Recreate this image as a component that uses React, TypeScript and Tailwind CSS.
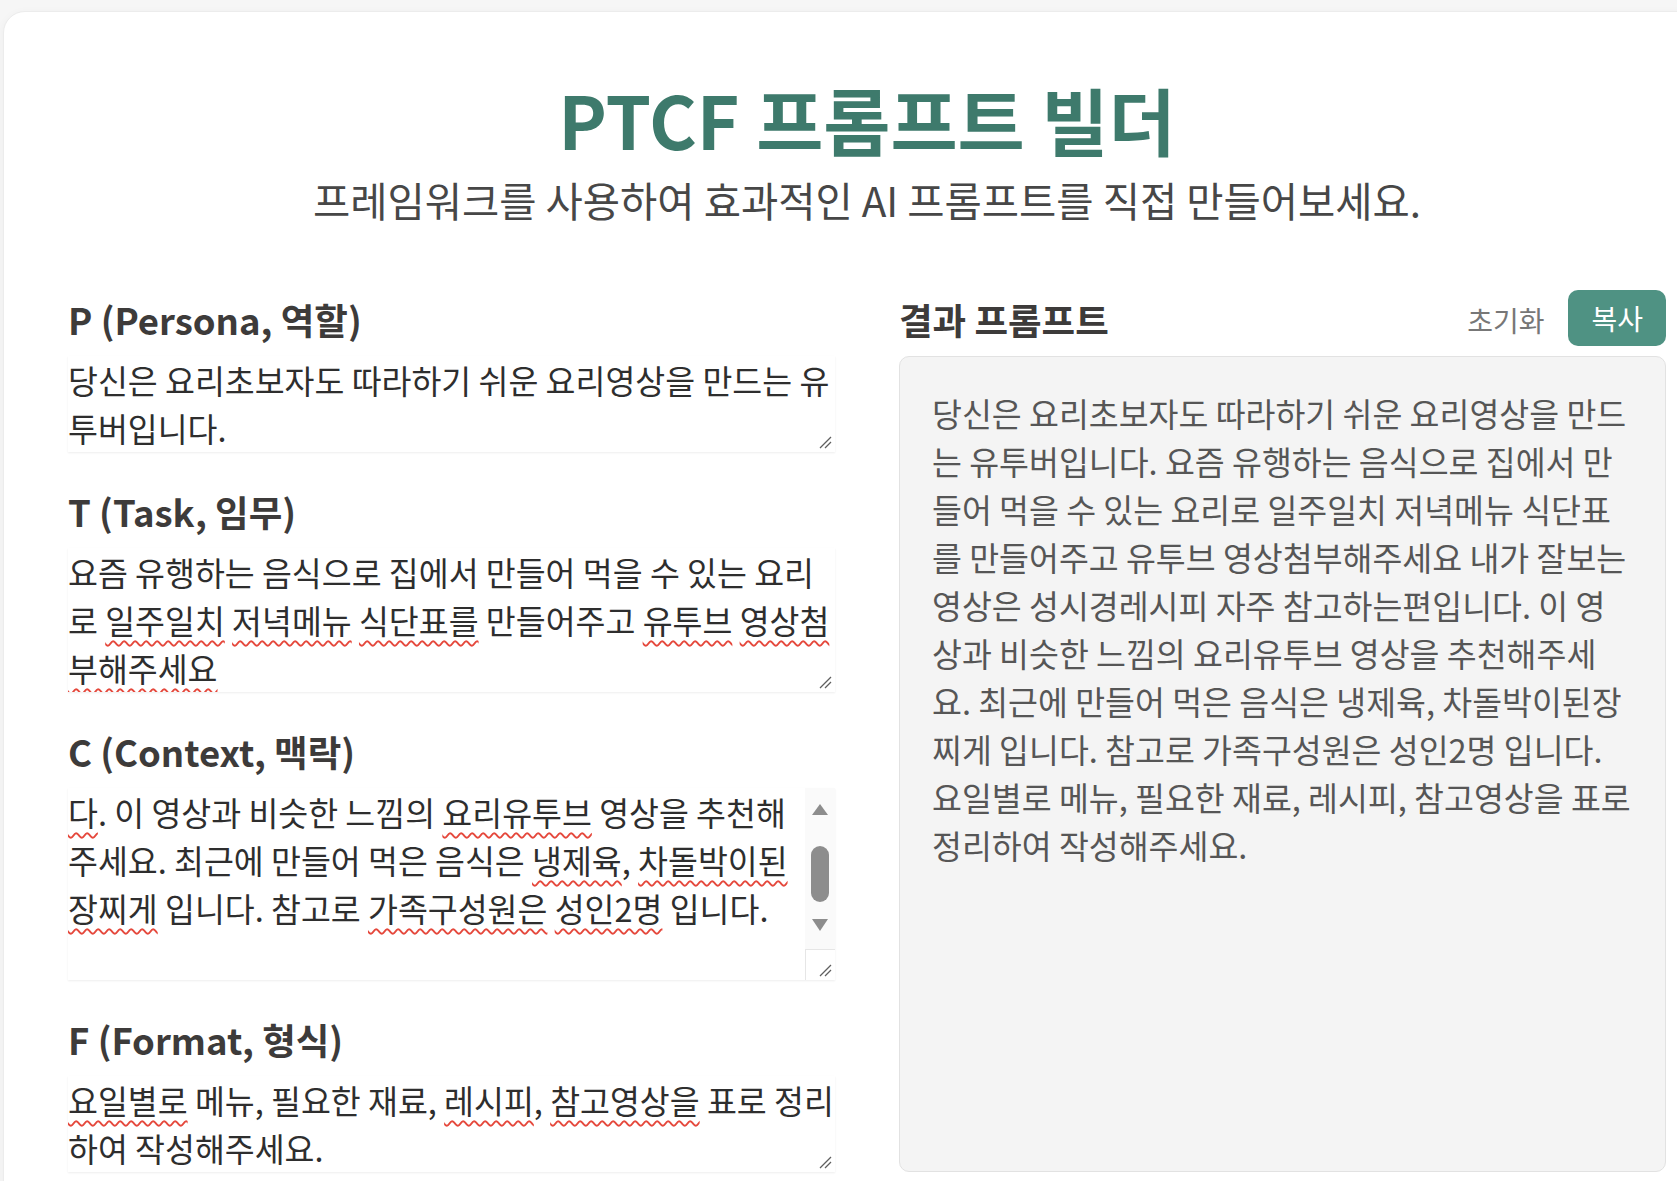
import React from "react";

// {word} marks a word the spell checker flags
const fields = [
  {
    label: "P (Persona, 역할)",
    rows: 2,
    lines: ["당신은 요리초보자도 따라하기 쉬운 요리영상을 만드는 유", "투버입니다."],
  },
  {
    label: "T (Task, 임무)",
    rows: 3,
    lines: [
      "요즘 유행하는 음식으로 집에서 만들어 먹을 수 있는 요리",
      "로 {일주일치} {저녁메뉴} {식단표를} 만들어주고 {유투브} {영상첨}",
      "{부해주세요}",
    ],
  },
  {
    label: "C (Context, 맥락)",
    rows: 4,
    scrolled: true,
    lines: [
      "내가 잘보는 영상은 성시경레시피 자주 참고하는편입니",
      "{다}. 이 영상과 비슷한 느낌의 {요리유투브} 영상을 추천해",
      "주세요. 최근에 만들어 먹은 음식은 {냉제육}, {차돌박이된}",
      "{장찌게} 입니다. 참고로 {가족구성원은} {성인2명} 입니다.",
    ],
  },
  {
    label: "F (Format, 형식)",
    rows: 2,
    lines: [
      "{요일별로} 메뉴, 필요한 재료, {레시피}, {참고영상을} 표로 정리",
      "하여 작성해주세요.",
    ],
  },
];

const result = [
  "당신은 요리초보자도 따라하기 쉬운 요리영상을 만드",
  "는 유투버입니다. 요즘 유행하는 음식으로 집에서 만",
  "들어 먹을 수 있는 요리로 일주일치 저녁메뉴 식단표",
  "를 만들어주고 유투브 영상첨부해주세요 내가 잘보는",
  "영상은 성시경레시피 자주 참고하는편입니다. 이 영",
  "상과 비슷한 느낌의 요리유투브 영상을 추천해주세",
  "요. 최근에 만들어 먹은 음식은 냉제육, 차돌박이된장",
  "찌게 입니다. 참고로 가족구성원은 성인2명 입니다.",
  "요일별로 메뉴, 필요한 재료, 레시피, 참고영상을 표로",
  "정리하여 작성해주세요.",
];

function Line({ text }: { text: string }) {
  const parts = text.split(/(\{[^}]+\})/).filter(Boolean);
  return (
    <div className="whitespace-pre">
      {parts.map((p, i) =>
        p.startsWith("{") ? (
          <span
            key={i}
            className="underline decoration-[#e5483c] decoration-wavy decoration-[1.5px] underline-offset-[6px]"
          >
            {p.slice(1, -1)}
          </span>
        ) : (
          <span key={i}>{p}</span>
        )
      )}
    </div>
  );
}

function Grip() {
  return (
    <svg
      className="absolute bottom-[3px] right-[3px] h-[14px] w-[14px]"
      viewBox="0 0 14 14"
    >
      <path d="M13 2 L2 13 M13 7 L7 13" stroke="#5f5f5f" strokeWidth="1.3" />
    </svg>
  );
}

function Field({
  label,
  lines,
  rows,
  scrolled,
}: {
  label: string;
  lines: string[];
  rows: number;
  scrolled?: boolean;
}) {
  return (
    <div>
      <h3 className="mb-3 h-12 whitespace-nowrap text-[36.5px] font-bold leading-[48px] text-[#3d3b3a]">
        {label}
      </h3>
      <div
        className="relative overflow-hidden bg-white text-[32.5px] leading-[48px] text-[#2e2e2e] shadow-[0_1px_2px_rgba(0,0,0,0.07)]"
        style={{ height: rows * 48 }}
      >
        {scrolled ? (
          <>
            <div className="-mt-12">
              {lines.map((l, i) => (
                <Line key={i} text={l} />
              ))}
            </div>
            {/* scrollbar */}
            <div className="absolute right-0 top-0 flex h-[161px] w-[30px] flex-col items-center bg-[#fafafa] pt-[15px]">
              <svg width="18" height="13" viewBox="0 0 18 13">
                <path d="M9 1 L17 12 L1 12 Z" fill="#8d8d8d" />
              </svg>
              <div className="mt-[30px] h-[56px] w-[18px] rounded-full bg-[#8d8d8d]" />
              <svg className="mt-[16px]" width="18" height="14" viewBox="0 0 18 14">
                <path d="M1 1 L17 1 L9 13 Z" fill="#8d8d8d" />
              </svg>
            </div>
            <div className="absolute bottom-0 right-0 h-[31px] w-[30px] border-l border-t border-[#e6e6e6] bg-white" />
          </>
        ) : (
          lines.map((l, i) => <Line key={i} text={l} />)
        )}
        <Grip />
      </div>
    </div>
  );
}

export default function App() {
  return (
    <div
      className="h-[1181px] w-full overflow-hidden bg-[#f6f6f6]"
      style={{ fontFamily: '"Noto Sans CJK KR", "Noto Sans", sans-serif' }}
    >
      <div className="ml-[3px] mt-[11px] w-[1728px] rounded-tl-[22px] border border-[#ececec] bg-white px-16 pt-[62px] pb-16 shadow-[0_2px_10px_rgba(0,0,0,0.04)]">
        <header className="text-center">
          <h1 className="text-[73px] font-bold leading-[88px] text-[#3e7a6c]">
            PTCF 프롬프트 빌더
          </h1>
          <p className="mt-[10px] text-[40.5px] leading-[56px] text-[#474747]">
            프레임워크를 사용하여 효과적인 AI 프롬프트를 직접 만들어보세요.
          </p>
        </header>

        <div className="mt-[68px] grid grid-cols-2 gap-16">
          <div className="space-y-9">
            {fields.map((f) => (
              <Field key={f.label} {...f} />
            ))}
          </div>

          <div className="flex flex-col">
            <div className="mb-3 flex h-12 items-center justify-between">
              <h3 className="text-[36.5px] font-bold leading-[48px] text-[#3d3b3a]">
                결과 프롬프트
              </h3>
              <div className="-mt-1 flex items-center gap-[24px]">
                <button className="mt-1 text-[28px] text-[#777]">초기화</button>
                <button className="h-[56px] rounded-[10px] bg-[#4f9283] px-[23px] text-[28px] text-white">
                  복사
                </button>
              </div>
            </div>
            <div className="flex-1 rounded-[10px] border border-[#e2e2e2] bg-[#f4f4f4] p-8 text-[32.5px] leading-[48px] text-[#565656]">
              {result.map((l, i) => (
                <div key={i} className="whitespace-pre">
                  {l}
                </div>
              ))}
            </div>
          </div>
        </div>
      </div>
    </div>
  );
}
